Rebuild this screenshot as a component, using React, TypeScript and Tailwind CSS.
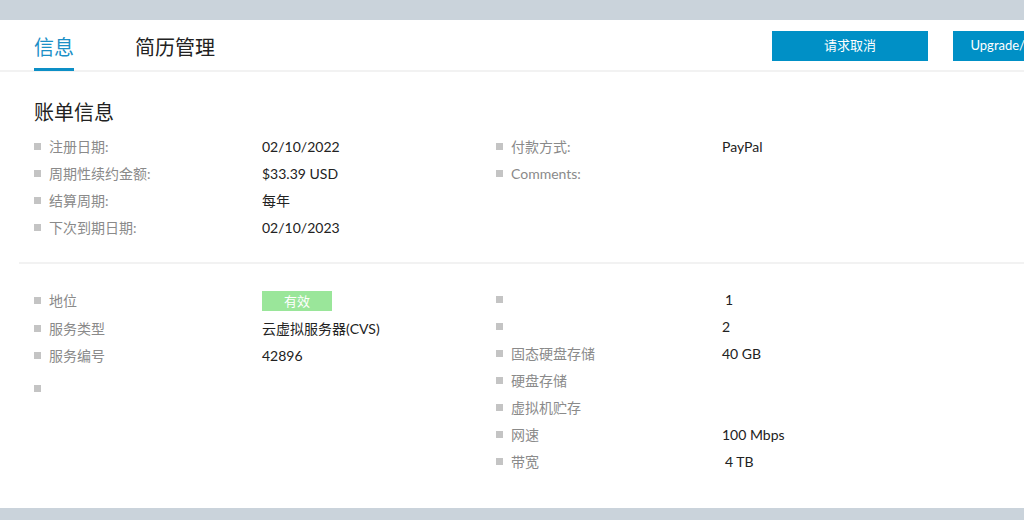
import React from 'react';

type Row = { label: string; value?: React.ReactNode; h?: string };

const billingLeft: Row[] = [
    { label: '注册日期:', value: '02/10/2022' },
    { label: '周期性续约金额:', value: '$33.39 USD' },
    { label: '结算周期:', value: '每年' },
    { label: '下次到期日期:', value: '02/10/2023' },
];

const billingRight: Row[] = [
    { label: '付款方式:', value: 'PayPal' },
    { label: 'Comments:' },
];

const serviceLeft: Row[] = [
    {
        label: '地位',
        h: 'h-[29px]',
        value: (
            <span className="inline-flex items-center justify-center w-[70px] h-[20px] bg-[#9ae69a] text-white text-[13px]">
                有效
            </span>
        ),
    },
    { label: '服务类型', value: '云虚拟服务器(CVS)' },
    { label: '服务编号', value: '42896' },
    { label: '', h: 'h-[27px] mt-[6px]' },
];

const serviceRight: Row[] = [
    { label: '', value: <span className="pl-[3px]">1</span> },
    { label: '', value: '2' },
    { label: '固态硬盘存储', value: '40 GB' },
    { label: '硬盘存储' },
    { label: '虚拟机贮存' },
    { label: '网速', value: '100 Mbps' },
    { label: '带宽', value: <span className="pl-[3px]">4 TB</span> },
];

const InfoRow: React.FC<{ row: Row; labelW: string }> = ({ row, labelW }) => (
    <div className={`flex items-center ${row.h ?? 'h-[27px]'}`}>
        <div className={`flex items-center shrink-0 ${labelW}`}>
            <span className="w-[7px] h-[7px] bg-[#c4c4c4] mr-[8px] shrink-0" />
            <span className="text-[14px] text-[#8a8a8a]">{row.label}</span>
        </div>
        <div className="text-[14px] text-[#222]">{row.value}</div>
    </div>
);

const Column: React.FC<{ rows: Row[]; width: string; labelW: string }> = ({ rows, width, labelW }) => (
    <div className={`shrink-0 ${width}`}>
        {rows.map((r, i) => (
            <InfoRow key={i} row={r} labelW={labelW} />
        ))}
    </div>
);

export default function App() {
    return (
        <div
            className="w-[1024px] h-[520px] bg-[#cad3db] pt-[20px] overflow-hidden"
            style={{ fontFamily: 'Lato, "Noto Sans CJK SC", sans-serif' }}
        >
            <div className="bg-white h-[488px] overflow-hidden">
                {/* tabs + actions */}
                <div className="flex items-start h-[52px] border-b-2 border-[#f2f2f2] pl-[34px]">
                    <div className="flex w-[738px] shrink-0">
                        <div className="h-[51px] pt-[13px] text-[20px] leading-[28px] text-[#1b8fc6] border-b-[3px] border-[#0d8fc6]">
                            信息
                        </div>
                        <div className="h-[51px] pt-[13px] ml-[61px] text-[20px] leading-[28px] text-[#222]">
                            简历管理
                        </div>
                    </div>
                    <div className="flex gap-[25px] shrink-0 mt-[11px]">
                        <button className="w-[156px] h-[30px] bg-[#0090c6] text-white text-[13px]">请求取消</button>
                        <button className="w-[156px] h-[30px] bg-[#0090c6] text-white text-[13px]">Upgrade/Downgrade</button>
                    </div>
                </div>

                {/* billing */}
                <div className="pl-[34px] pt-[26px] pb-[21px]">
                    <h2 className="text-[20px] leading-[28px] text-[#222] mb-[7px]">账单信息</h2>
                    <div className="flex">
                        <Column rows={billingLeft} width="w-[462px]" labelW="w-[228px]" />
                        <Column rows={billingRight} width="w-[400px]" labelW="w-[226px]" />
                    </div>
                </div>

                <div className="ml-[19px] border-t-2 border-[#f2f2f2]" />

                {/* service */}
                <div className="pl-[34px] pt-[22px] flex">
                    <Column rows={serviceLeft} width="w-[462px]" labelW="w-[228px]" />
                    <Column rows={serviceRight} width="w-[400px]" labelW="w-[226px]" />
                </div>
            </div>
        </div>
    );
}
